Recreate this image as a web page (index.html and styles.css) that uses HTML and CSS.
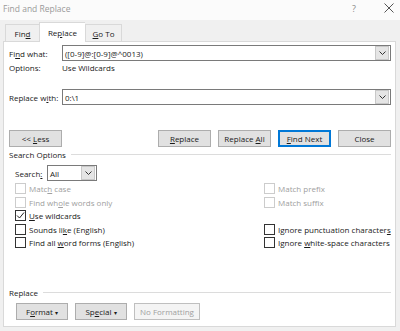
FILE: index.html
```html
<html>
    <head>
        <title>Find and Replace</title>
        <link rel="stylesheet" href="styles.css">
    </head>
    <body>
        <div class="window">
            <div class="titlebar">
                <span class="title">Find and Replace</span>
                <span class="help">?</span>
                <span class="close-x">
                    <svg width="10" height="10" viewBox="0 0 10 10"><path d="M0.5 0.5 L9.5 9.5 M9.5 0.5 L0.5 9.5" stroke="#555" stroke-width="1" fill="none"/></svg>
                </span>
            </div>
            <div class="tabs">
                <div class="tab find-tab">Fin<u>d</u></div>
                <div class="tab active">Re<u>p</u>lace</div>
                <div class="tab goto-tab"><u>G</u>o To</div>
            </div>
            <div class="panel">
                <div class="row field">
                    <span class="label">Fi<u>n</u>d what:</span>
                    <div class="combo">
                        <span class="value">([0-9]@:[0-9]@^0013)</span>
                        <span class="drop"><svg width="7" height="4" viewBox="0 0 7 4"><path d="M0.5 0.5 L3.5 3.5 L6.5 0.5" stroke="#333" fill="none"/></svg></span>
                    </div>
                </div>
                <div class="row options">
                    <span class="label">Options:</span>
                    <span>Use Wildcards</span>
                </div>
                <div class="row field replace-with">
                    <span class="label">Replace w<u>i</u>th:</span>
                    <div class="combo">
                        <span class="value">0:\1</span>
                        <span class="drop"><svg width="7" height="4" viewBox="0 0 7 4"><path d="M0.5 0.5 L3.5 3.5 L6.5 0.5" stroke="#333" fill="none"/></svg></span>
                    </div>
                </div>
                <div class="row buttons">
                    <button class="btn less">&lt;&lt; <u>L</u>ess</button>
                    <div class="spacer"></div>
                    <button class="btn"><u>R</u>eplace</button>
                    <button class="btn">Replace <u>A</u>ll</button>
                    <button class="btn default"><u>F</u>ind Next</button>
                    <button class="btn">Close</button>
                </div>
                <div class="group">
                    <span>Search Options</span>
                    <div class="rule"></div>
                </div>
                <div class="row search">
                    <span class="search-label">Search<u>:</u></span>
                    <div class="select">
                        <span class="value">All</span>
                        <span class="drop"><svg width="7" height="4" viewBox="0 0 7 4"><path d="M0.5 0.5 L3.5 3.5 L6.5 0.5" stroke="#333" fill="none"/></svg></span>
                    </div>
                </div>
                <div class="checks">
                    <div class="col">
                        <div class="check disabled"><span class="box"></span><span>Matc<u>h</u> case</span></div>
                        <div class="check disabled"><span class="box"></span><span>Find wh<u>o</u>le words only</span></div>
                        <div class="check"><span class="box"><svg width="9" height="9" viewBox="0 0 9 9"><path d="M1 4.5 L3.5 7 L8 1.5" stroke="#222" stroke-width="1" fill="none"/></svg></span><span><u>U</u>se wildcards</span></div>
                        <div class="check"><span class="box"></span><span>Sounds li<u>k</u>e (English)</span></div>
                        <div class="check"><span class="box"></span><span>Find all <u>w</u>ord forms (English)</span></div>
                    </div>
                    <div class="col right">
                        <div class="check disabled"><span class="box"></span><span>Match prefix</span></div>
                        <div class="check disabled"><span class="box"></span><span>Match suffix</span></div>
                        <div class="check"></div>
                        <div class="check"><span class="box"></span><span>Ignore punctuation character<u>s</u></span></div>
                        <div class="check"><span class="box"></span><span>Ignore <u>w</u>hite-space characters</span></div>
                    </div>
                </div>
                <div class="group bottom-group">
                    <span>Replace</span>
                    <div class="rule"></div>
                </div>
                <div class="row buttons bottom">
                    <button class="btn menu">F<u>o</u>rmat <span class="arrow">&#9662;</span></button>
                    <button class="btn menu">Sp<u>e</u>cial <span class="arrow">&#9662;</span></button>
                    <button class="btn disabled-btn">No Formatting</button>
                </div>
            </div>
        </div>
    </body>
</html>
```

FILE: styles.css
```css
body
{
    margin: 0;
    width: 400px;
    height: 331px;
    overflow: hidden;
    background-color: #f0f0f0;

    font-family: "Open Sans", sans-serif;
    font-size: 8px;
    color: #1a1a1a;
}

u
{
    text-decoration: underline;
    text-underline-offset: 1px;
}

.window
{
    height: 331px;
    display: flex;
    flex-direction: column;
}

.titlebar
{
    height: 20px;
    display: flex;
    align-items: center;
    background-color: #fbfbfb;
}

.title
{
    flex: 1;
    padding-left: 3px;
    padding-bottom: 4px;
    color: #9a9a9a;
    font-size: 8.5px;
}

.help
{
    width: 32px;
    padding-bottom: 4px;
    color: #8a8a8a;
    font-size: 9px;
}

.close-x
{
    width: 16px;
    padding-bottom: 4px;
    display: flex;
}

.tabs
{
    height: 21px;
    display: flex;
    align-items: flex-end;
    padding-left: 5px;
}

.tab
{
    height: 16px;
    display: flex;
    align-items: center;
    justify-content: center;
    border: 1px solid #d9d9d9;
    border-bottom: none;
    border-right: none;
    background-color: #f0f0f0;
}

.tab.find-tab
{
    width: 33px;
}

.tab.goto-tab
{
    width: 35px;
    border-right: 1px solid #d9d9d9;
}

.tab.active
{
    width: 45px;
    height: 19px;
    margin-bottom: -1px;
    background-color: #ffffff;
    position: relative;
    z-index: 1;
}

.panel
{
    flex: 1;
    margin: 0 4px 4px 3px;
    padding: 3px 4px 0 5px;
    background-color: #ffffff;
    border: 1px solid #d9d9d9;
}

.row
{
    display: flex;
    align-items: center;
}

.label
{
    width: 53px;
}

.combo
{
    flex: 1;
    height: 14px;
    display: flex;
    align-items: center;
    border: 1px solid #7a7a7a;
}

.value
{
    flex: 1;
    padding-left: 2px;
}

.drop
{
    width: 12px;
    height: 12px;
    margin-right: 1px;
    display: flex;
    align-items: center;
    justify-content: center;
    background-color: #e5e5e5;
    border: 1px solid #c8c8c8;
}

.options
{
    margin-top: 1px;
    height: 10px;
}

.replace-with
{
    margin-top: 17px;
}

.buttons
{
    margin-top: 25px;
}

.spacer
{
    flex: 1;
}

.btn
{
    height: 17px;
    width: 53px;
    padding: 0;
    margin-left: 7px;
    background-color: #e1e1e1;
    border: 1px solid #adadad;
    font-family: "Open Sans", sans-serif;
    font-size: 8px;
    color: #1a1a1a;
}

.btn.less
{
    margin-left: 0;
}

.btn.default
{
    border: 2px solid #0078d7;
}

.group
{
    margin-top: 2px;
    display: flex;
    align-items: center;
}

.group .rule
{
    flex: 1;
    margin-left: 5px;
    border-top: 1px solid #dcdcdc;
}

.search
{
    margin-top: 5px;
    padding-left: 6px;
}

.search-label
{
    width: 32px;
}

.select
{
    width: 48px;
    height: 14px;
    display: flex;
    align-items: center;
    border: 1px solid #7a7a7a;
}

.checks
{
    margin-top: 1px;
    padding-left: 6px;
    display: flex;
}

.col
{
    flex: 1;
}

.col.right
{
    flex: none;
    width: 127px;
}

.check
{
    height: 13.5px;
    display: flex;
    align-items: center;
}

.check .box
{
    width: 9px;
    height: 9px;
    margin-right: 3px;
    display: flex;
    align-items: center;
    justify-content: center;
    border: 1px solid #333;
    background-color: #ffffff;
}

.check.disabled
{
    color: #a0a0a0;
}

.check.disabled .box
{
    border-color: #cccccc;
}

.bottom-group
{
    margin-top: 37px;
}

.buttons.bottom
{
    margin-top: 5px;
    padding-left: 7px;
}

.btn.menu
{
    margin-left: 0;
    margin-right: 7px;
    width: 52px;
}

.arrow
{
    font-size: 6px;
}

.btn.disabled-btn
{
    margin-left: 0;
    width: 66px;
    color: #a0a0a0;
    background-color: #f4f4f4;
    border-color: #bfbfbf;
}
```
